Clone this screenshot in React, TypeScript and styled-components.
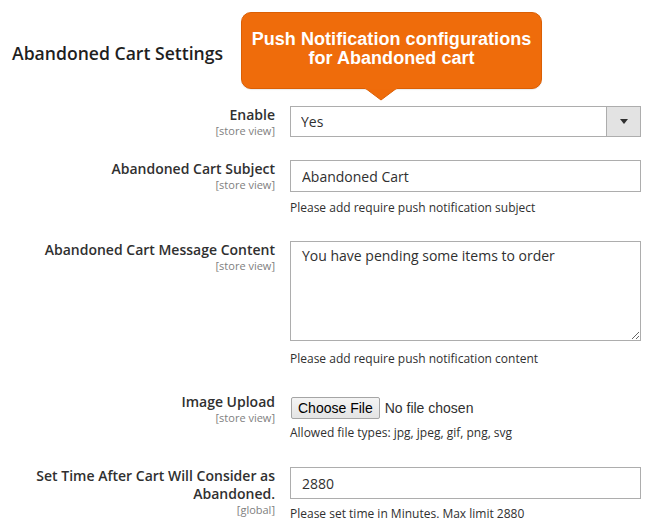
import React from "react";
import styled, { createGlobalStyle } from "styled-components";

const GlobalStyle = createGlobalStyle`
  body {
    margin: 0;
    background: #fff;
    font-family: "Open Sans", "Liberation Sans", sans-serif;
    color: #303030;
  }
`;

const Page = styled.div`
  position: relative;
  width: 653px;
  height: 530px;
  overflow: hidden;
  padding-top: 41px;
  box-sizing: border-box;
`;

const Title = styled.h2`
  margin: 0 0 41px 12px;
  font-size: 17.6px;
  line-height: 24px;
  font-weight: 600;
  color: #1f1f1f;
`;

// annotation bubble laid over the header
const Callout = styled.div`
  position: absolute;
  top: 12px;
  left: 241px;
  width: 301px;
  height: 77px;
  box-sizing: border-box;
  padding-top: 17px;
  background: #ef6c0b;
  border: 1px solid #db5f04;
  border-radius: 10px;
  color: #fff;
  font-family: "Liberation Sans", Arial, sans-serif;
  font-weight: 700;
  font-size: 18px;
  line-height: 19px;
  letter-spacing: 0.05px;
  text-align: center;
  box-shadow: 0 1px 1px rgba(0, 0, 0, 0.08);
`;

const Tail = styled.svg`
  position: absolute;
  left: 123px;
  bottom: -13px;
`;

const Row = styled.div<{ $space: number }>`
  display: grid;
  grid-template-columns: 263px 351px;
  column-gap: 15px;
  margin: 0 0 ${({ $space }) => $space}px 12px;
`;

const LabelCol = styled.div`
  text-align: right;
`;

const Label = styled.div`
  font-size: 14px;
  line-height: 18px;
  font-weight: 600;
  color: #303030;
`;

const Scope = styled.div`
  font-size: 11px;
  line-height: 13px;
  color: #808080;
`;

const Control = styled.div``;

const TextInput = styled.input`
  display: block;
  width: 100%;
  height: 32px;
  box-sizing: border-box;
  border: 1px solid #adadad;
  padding: 0 11px;
  font-family: "Open Sans", sans-serif;
  font-size: 14px;
  color: #303030;
  background: #fff;
  outline: none;
`;

const TextArea = styled.textarea`
  display: block;
  width: 100%;
  height: 100px;
  box-sizing: border-box;
  border: 1px solid #adadad;
  padding: 4px 11px;
  font-family: "Open Sans", sans-serif;
  font-size: 14px;
  line-height: 20px;
  color: #303030;
  resize: both;
  outline: none;
`;

const SelectBox = styled.div`
  display: flex;
  height: 31px;
  box-sizing: border-box;
  border: 1px solid #adadad;
  background: #fff;
`;

const Select = styled.select`
  flex: 1;
  appearance: none;
  border: 0;
  padding: 0 10px;
  background: transparent;
  font-family: "Open Sans", sans-serif;
  font-size: 14px;
  color: #303030;
  outline: none;
`;

const SelectArrow = styled.div`
  width: 33px;
  display: flex;
  align-items: center;
  justify-content: center;
  background: #e3e3e3;
  border-left: 1px solid #adadad;
`;

const FileInput = styled.input`
  display: block;
  margin-top: 4px;
  font-family: "Liberation Sans", Arial, sans-serif;
  font-size: 14px;
  color: #303030;

  &::file-selector-button {
    font-family: "Liberation Sans", Arial, sans-serif;
    font-size: 14px;
    height: 22px;
    padding: 0 6px;
    margin: 0 5px 0 1px;
    border: 1px solid #a5a5a5;
    border-radius: 2px;
    background: linear-gradient(#f4f4f4, #e4e4e4);
    color: #000;
  }
`;

const Note = styled.div<{ $top: number }>`
  margin-top: ${({ $top }) => $top}px;
  font-size: 12px;
  line-height: 18px;
  color: #303030;
`;

export default function App() {
  return (
    <Page>
      <GlobalStyle />
      <Title>Abandoned Cart Settings</Title>
      <Callout>
        Push Notification configurations
        <br />
        for Abandoned cart
        <Tail width="32" height="13" viewBox="0 0 32 13">
          <path d="M0 0 L16 12 L32 0 Z" fill="#ef6c0b" />
          <path d="M0 0 L16 12 L32 0" fill="none" stroke="#db5f04" strokeWidth="1" />
          <rect x="0" y="0" width="32" height="1.2" fill="#ef6c0b" />
        </Tail>
      </Callout>

      <Row $space={23}>
        <LabelCol>
          <Label>Enable</Label>
          <Scope>[store view]</Scope>
        </LabelCol>
        <Control>
          <SelectBox>
            <Select defaultValue="1">
              <option value="1">Yes</option>
              <option value="0">No</option>
            </Select>
            <SelectArrow>
              <svg width="8" height="5" viewBox="0 0 8 5">
                <path d="M0 0 H8 L4 5 Z" fill="#303030" />
              </svg>
            </SelectArrow>
          </SelectBox>
        </Control>
      </Row>

      <Row $space={24}>
        <LabelCol>
          <Label>Abandoned Cart Subject</Label>
          <Scope>[store view]</Scope>
        </LabelCol>
        <Control>
          <TextInput defaultValue="Abandoned Cart" />
          <Note $top={7}>Please add require push notification subject</Note>
        </Control>
      </Row>

      <Row $space={25}>
        <LabelCol>
          <Label>Abandoned Cart Message Content</Label>
          <Scope>[store view]</Scope>
        </LabelCol>
        <Control>
          <TextArea defaultValue="You have pending some items to order" />
          <Note $top={9}>Please add require push notification content</Note>
        </Control>
      </Row>

      <Row $space={25}>
        <LabelCol>
          <Label>Image Upload</Label>
          <Scope>[store view]</Scope>
        </LabelCol>
        <Control>
          <FileInput type="file" />
          <Note $top={5}>Allowed file types: jpg, jpeg, gif, png, svg</Note>
        </Control>
      </Row>

      <Row $space={0}>
        <LabelCol>
          <Label>
            Set Time After Cart Will Consider as
            <br />
            Abandoned.
          </Label>
          <Scope>[global]</Scope>
        </LabelCol>
        <Control>
          <TextInput defaultValue="2880" />
          <Note $top={6}>Please set time in Minutes. Max limit 2880</Note>
        </Control>
      </Row>
    </Page>
  );
}
